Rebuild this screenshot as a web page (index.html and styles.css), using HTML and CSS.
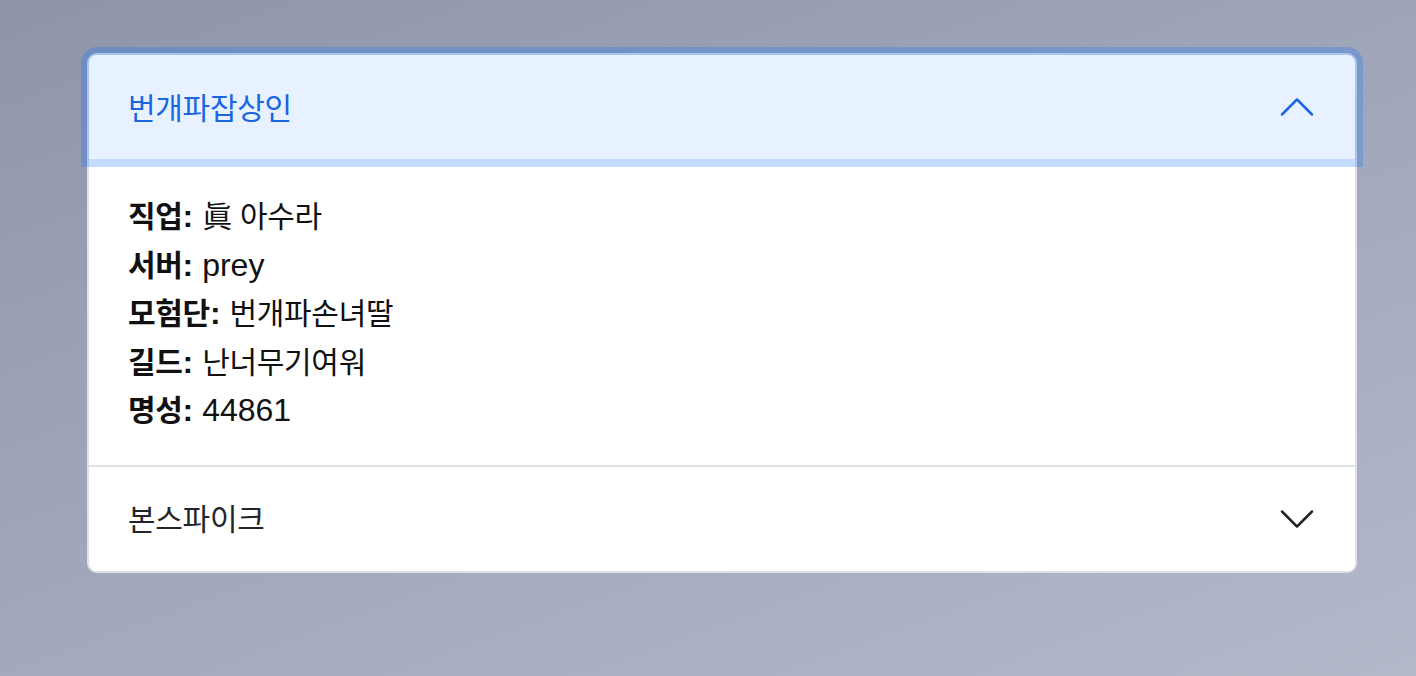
FILE: index.html
```html
<!DOCTYPE html>
<html lang="ko">
<head>
<meta charset="utf-8">
<title>Accordion</title>
<link rel="stylesheet" href="styles.css">
</head>
<body>
<main class="page">
  <div class="accordion">
    <div class="item">
      <button class="head open" type="button">
        <span class="ko">번개파잡상인</span>
        <svg class="chev up" viewBox="0 0 16 16" width="40" height="40"><path fill-rule="evenodd" d="M1.646 4.646a.5.5 0 0 1 .708 0L8 10.293l5.646-5.647a.5.5 0 0 1 .708.708l-6 6a.5.5 0 0 1-.708 0l-6-6a.5.5 0 0 1 0-.708z"/></svg>
      </button>
      <div class="body">
        <div class="row"><b class="ko">직업</b><b>:</b> <span class="ko">眞 아수라</span></div>
        <div class="row"><b class="ko">서버</b><b>:</b> prey</div>
        <div class="row"><b class="ko">모험단</b><b>:</b> <span class="ko">번개파손녀딸</span></div>
        <div class="row"><b class="ko">길드</b><b>:</b> <span class="ko">난너무기여워</span></div>
        <div class="row"><b class="ko">명성</b><b>:</b> 44861</div>
      </div>
    </div>
    <div class="item">
      <button class="head" type="button">
        <span class="ko">본스파이크</span>
        <svg class="chev" viewBox="0 0 16 16" width="40" height="40"><path fill-rule="evenodd" d="M1.646 4.646a.5.5 0 0 1 .708 0L8 10.293l5.646-5.647a.5.5 0 0 1 .708.708l-6 6a.5.5 0 0 1-.708 0l-6-6a.5.5 0 0 1 0-.708z"/></svg>
      </button>
    </div>
  </div>
</main>
</body>
</html>
```

FILE: styles.css
```css
html, body {
  margin: 0;
  height: 100%;
}

body {
  background: linear-gradient(160deg, #8e95ab 0%, #a1a7bb 50%, #b3b8cb 100%);
  font-family: "Liberation Sans", "Noto Sans CJK KR", sans-serif;
  font-size: 32px;
  color: #111;
}

.page {
  padding: 53px 59px 0 87px;
}

.accordion {
  background: #fff;
  border: 2px solid #dee2e6;
  border-radius: 10px;
}

.item + .item {
  border-top: 2px solid #dee2e6;
}

.ko {
  font-family: "Noto Sans CJK KR", sans-serif;
  font-size: 30px;
  letter-spacing: -0.3px;
  line-height: 1;
}

.head {
  display: flex;
  align-items: center;
  justify-content: space-between;
  width: 100%;
  box-sizing: border-box;
  height: 104px;
  padding: 0 38px 3px 39px;
  border: 0;
  margin: 0;
  background: #fff;
  color: #212529;
  font: inherit;
  line-height: 40px;
  text-align: left;
  cursor: pointer;
  border-radius: 0 0 8px 8px;
}

.head .chev {
  margin-top: 3px;
}

.head.open {
  position: relative;
  z-index: 2;
  background: #e7f1ff;
  color: #1a66e0;
  border-radius: 8px 8px 0 0;
  box-shadow: 0 0 0 8px rgba(13, 110, 253, 0.25);
}

.head .ko {
  font-weight: 400;
}

.chev {
  display: block;
  flex: none;
  fill: #212529;
}

.chev.up {
  fill: #1a66e0;
  transform: rotate(180deg);
}

.body {
  padding: 33px 40px 30px 39px;
}

.row {
  line-height: 48.5px;
}

.row b {
  font-weight: 700;
}
```
